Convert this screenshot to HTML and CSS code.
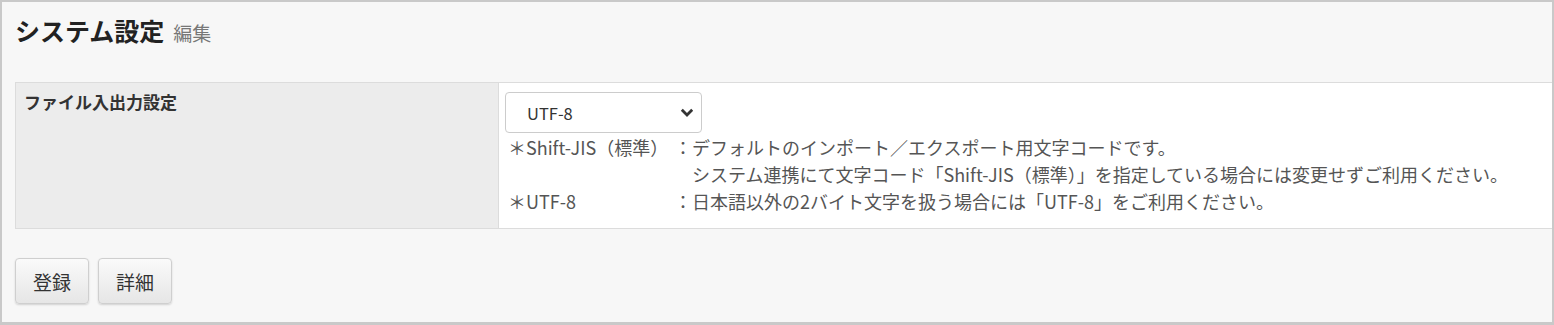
FILE: index.html
```html
<!DOCTYPE html>
<html lang="ja">
<head>
  <meta charset="UTF-8" />
  <meta name="viewport" content="width=device-width, initial-scale=1.0" />
  <title>システム設定</title>
  <link rel="stylesheet" href="styles.css">
</head>
<body>
  <div class="page">
    <h1 class="title">システム設定 <span class="sub">編集</span></h1>

    <table class="form">
      <tr>
        <th>ファイル入出力設定</th>
        <td>
          <select class="charset">
            <option>Shift-JIS（標準）</option>
            <option selected>UTF-8</option>
          </select>
          <div class="notes">
            <div class="key">＊Shift-JIS（標準）</div>
            <div class="val">：デフォルトのインポート／エクスポート用文字コードです。<br>システム連携にて文字コード「Shift-JIS（標準）」を指定している場合には変更せずご利用ください。</div>
            <div class="key">＊UTF-8</div>
            <div class="val">：日本語以外の2バイト文字を扱う場合には「UTF-8」をご利用ください。</div>
          </div>
        </td>
      </tr>
    </table>

    <div class="actions">
      <button class="btn">登録</button>
      <button class="btn">詳細</button>
    </div>
  </div>
</body>
</html>
```

FILE: styles.css
```css
html, body {
  margin: 0;
  height: 100%;
}

body {
  font-family: "Noto Sans CJK JP", "Noto Sans", sans-serif;
  color: #333;
  background: #fff;
}

.page {
  box-sizing: border-box;
  height: 325px;
  border: 2px solid #c9c9c9;
  border-bottom-width: 3px;
  background: #f7f7f7;
  padding: 9px 0 0 13px;
  overflow: hidden;
}

.title {
  display: flex;
  align-items: baseline;
  gap: 9px;
  margin: 0;
  height: 38px;
  font-size: 25px;
  line-height: 38px;
  font-weight: bold;
  color: #222;
}

.title .sub {
  font-size: 19px;
  font-weight: normal;
  color: #777;
}

.form {
  margin-top: 33px;
  width: calc(100% + 2px);
  border-collapse: collapse;
  font-size: 18px;
}

.form th,
.form td {
  border: 1px solid #dcdcdc;
  vertical-align: top;
  text-align: left;
}

.form th {
  width: 466px;
  background: #ececec;
  padding: 7px 8px;
  font-size: 17px;
  line-height: 24px;
  color: #333;
}

.form td {
  background: #fff;
  padding: 9px 6px 13px;
  border-right: none;
}

.charset {
  display: block;
  width: 197px;
  height: 41px;
  border: 1px solid #ccc;
  border-radius: 4px;
  background: #fff;
  padding: 0 14px 0 21px;
  font-family: "Noto Sans CJK JP", "Noto Sans", sans-serif;
  font-size: 16.5px;
  color: #333;
  appearance: none;
  background-image: url("data:image/svg+xml,%3Csvg xmlns='http://www.w3.org/2000/svg' width='14' height='9' viewBox='0 0 14 9'%3E%3Cpath d='M1.8 1.8 7 7l5.2-5.2' fill='none' stroke='%23333' stroke-width='2.8'/%3E%3C/svg%3E");
  background-repeat: no-repeat;
  background-position: right 7px center;
}

.notes {
  display: grid;
  grid-template-columns: 166px 1fr;
  margin-top: 1px;
  padding-left: 3px;
  line-height: 27px;
  color: #555;
}

.notes .val {
  padding-left: 1em;
  text-indent: -1em;
}

.actions {
  display: flex;
  gap: 9px;
  margin-top: 29px;
}

.btn {
  width: 74px;
  height: 46px;
  border: 1px solid #cfcfcf;
  border-radius: 4px;
  background: linear-gradient(#fafafa, #e6e6e6);
  box-shadow: 0 1px 2px rgba(0, 0, 0, 0.15);
  font-family: "Noto Sans CJK JP", "Noto Sans", sans-serif;
  font-size: 19px;
  color: #333;
  cursor: pointer;
}
```
